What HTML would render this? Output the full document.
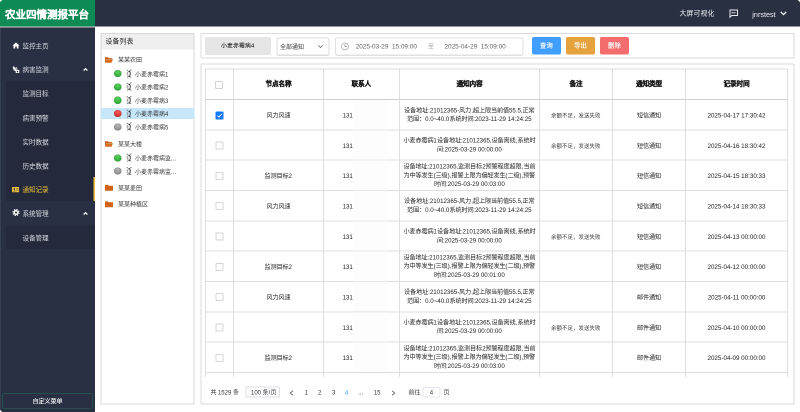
<!DOCTYPE html>
<html lang="zh-CN">
<head>
<meta charset="utf-8">
<style>
*{box-sizing:border-box;margin:0;padding:0}
html,body{width:800px;height:412px;overflow:hidden;background:#fff;will-change:transform;font-family:"Liberation Sans",sans-serif;position:relative}
.a{position:absolute}
#hdr{left:0;top:0;width:1600px;height:53px;background:#283042}
#logo{left:0;top:0;width:190px;height:53px;background:#0e8a55;color:#fff;font-weight:700;font-size:21px;line-height:53px;padding-left:9.8px;padding-top:2px;-webkit-text-stroke:0.7px #fff;white-space:nowrap}
#logoline{left:0;top:53px;width:190px;height:2px;background:#d6ccd6}
#side{left:0;top:55px;width:190px;height:769px;background:#293044}
.sub{left:12px;width:178px;background:#242a3b}
.mi{position:absolute;left:45px;font-size:13.2px;color:#d9dce3;line-height:16px;white-space:nowrap}
.chev{position:absolute;left:166px;width:10px;height:6px}
#tree{left:200.6px;top:66.4px;width:188.8px;height:743px;border:2px solid #d8d8d8}
#treeh{left:0;top:0;width:100%;height:30.8px;background:#efefef;font-size:13.7px;line-height:30.8px;padding-left:8px;color:#222}
.tn{position:absolute;font-size:12px;color:#333;white-space:nowrap;line-height:16px}
.panel{border:2px solid #dadada;border-radius:3px}
.btn{position:absolute;top:74px;height:35.4px;border-radius:4px;color:#fff;font-size:12.6px;line-height:35.4px;text-align:center;-webkit-text-stroke:0.3px #fff}
table{border-collapse:collapse}
.th{position:absolute;font-size:13.34px;font-weight:bold;color:#111;-webkit-text-stroke:0.4px #111;text-align:center;line-height:16px;white-space:nowrap}
.td{position:absolute;font-size:12.3px;color:#222;text-align:center;line-height:16px;white-space:nowrap}
.td.sm{font-size:10.8px;color:#3a3a3a}
.td.tm{font-size:12.5px}
.cb{position:absolute;width:16px;height:16px;border:2px solid #d4d4d4;border-radius:2px;background:#fff}
.cb.on{background:#1677ff;border-color:#1677ff}
.cb svg{position:absolute;left:-2px;top:-2px}
.pg{position:absolute;top:777.2px;font-size:12px;line-height:16px;color:#333;white-space:nowrap}
.pc{width:12px;text-align:center}
.cell{position:absolute;font-size:12px;color:#333;text-align:center;line-height:16px;white-space:nowrap}
#root{position:absolute;left:0;top:0;width:1600px;height:824px;transform:scale(0.5);transform-origin:0 0;overflow:hidden}
</style>
</head>
<body>
<div id="root">
<div id="hdr" class="a"></div>
<div id="logo" class="a">农业四情测报平台</div>
<div id="logoline" class="a"></div>
<div class="a" style="left:1359.2px;top:19px;font-size:13.8px;color:#f4f5f7;line-height:16px;white-space:nowrap">大屏可视化</div>
<svg class="a" style="left:1457px;top:18px" width="20" height="18" viewBox="0 0 10 9"><path d="M1 1 H9 V6.5 H3.2 L1.5 8.2 V1 Z" fill="none" stroke="#e8eaf0" stroke-width="1"/><path d="M3 3.8 H7" stroke="#e8eaf0" stroke-width="0.9"/></svg>
<div class="a" style="left:1504.6px;top:20.6px;font-size:14.5px;color:#f4f5f7;line-height:16px;white-space:nowrap">jnrstest</div>
<svg class="a" style="left:1559.6px;top:22.4px" width="14" height="10" viewBox="0 0 7 5"><path d="M0.8 0.9 L3.5 3.6 L6.2 0.9" fill="none" stroke="#eef0f4" stroke-width="1.35"/></svg>

<div id="side" class="a">
</div>
<div class="a sub" style="top:162px;height:240px"></div>
<div class="a sub" style="top:451.2px;height:47px"></div>
<div class="a" style="left:187px;top:354px;width:3px;height:48px;background:#eec23a"></div>
<div class="a" style="left:0;top:55px;width:190px;height:769px">
  <!-- top items -->
  <svg class="a" style="left:25px;top:30px" width="14" height="12" viewBox="0 0 7 6"><path d="M3.5 0 L7 3 H6 V6 H4.3 V4 H2.7 V6 H1 V3 H0 Z" fill="#fff"/></svg>
  <div class="mi" style="top:30.4px">监控主页</div>
  <svg class="a" style="left:24.6px;top:76.6px" width="14" height="14.8" viewBox="0 0 7 7.4"><ellipse cx="2" cy="2.8" rx="1.3" ry="2.7" transform="rotate(-28 2 2.8)" fill="#e8eaf0"/><path d="M3.8 1.2 L4.6 3.6" stroke="#e8eaf0" stroke-width="0.9"/><rect x="3.2" y="3.9" width="3.6" height="3.4" fill="#fff"/><circle cx="5" cy="5.6" r="0.75" fill="#293044"/></svg>
  <div class="mi" style="top:77.4px">病害监测</div>
  <svg class="chev" style="top:81px" viewBox="0 0 5 3"><path d="M0.6 2.5 L2.5 0.7 L4.4 2.5" fill="none" stroke="#fff" stroke-width="1.25"/></svg>
  <div class="mi" style="top:125.4px">监测目标</div>
  <div class="mi" style="top:174.4px">病害预警</div>
  <div class="mi" style="top:222.4px">实时数据</div>
  <div class="mi" style="top:270.4px">历史数据</div>
  <svg class="a" style="left:24.2px;top:319.2px" width="14.2" height="10.6" viewBox="0 0 7.1 5.3"><rect x="0" y="0" width="7.1" height="5.3" rx="0.5" fill="#eec23a"/><circle cx="2.3" cy="2" r="0.9" fill="#293044"/><path d="M0.9 4.4 Q2.3 2.6 3.7 4.4 Z" fill="#293044"/><rect x="4.4" y="1.5" width="1.9" height="0.6" fill="#293044"/><rect x="4.4" y="2.8" width="1.9" height="0.6" fill="#293044"/></svg>
  <div class="mi" style="top:317.4px;color:#eec23a">通知记录</div>
  <svg class="a" style="left:25.2px;top:363.2px" width="14" height="14" viewBox="0 0 7 7"><circle cx="3.5" cy="3.5" r="2.5" fill="#fff"/><circle cx="3.5" cy="3.5" r="3" fill="none" stroke="#fff" stroke-width="1.1" stroke-dasharray="1.3 1.05"/><circle cx="3.5" cy="3.5" r="1.05" fill="#293044"/></svg>
  <div class="mi" style="top:365.4px">系统管理</div>
  <svg class="chev" style="top:369px" viewBox="0 0 5 3"><path d="M0.6 2.5 L2.5 0.7 L4.4 2.5" fill="none" stroke="#fff" stroke-width="1.25"/></svg>
  <div class="mi" style="top:414.4px">设备管理</div>
  <div class="a" style="left:4px;top:731px;width:182px;height:31px;border:1.5px solid #1f7252;border-radius:4px;color:#fff;font-size:12.2px;line-height:28px;padding-top:2px;-webkit-text-stroke:0.2px #fff;text-align:center">自定义菜单</div>
</div>

<!-- tree -->
<div id="tree" class="a">
  <div id="treeh" class="a">设备列表</div>
</div>
<div id="treeitems">
<div class="a" style="left:202px;top:216px;width:186.8px;height:22px;background:#c6e6fa"></div>
<svg class="a" style="left:210px;top:113.6px" width="16" height="12" viewBox="0 0 8 6"><path d="M0 0.3 H3 L3.7 1.1 H7 V2 H1.6 L0 5.5 Z" fill="#c45a12"/><path d="M1.7 2.2 H8 L6.5 5.7 H0 Z" fill="#d66d1e"/></svg>
<div class="tn" style="left:236px;top:112.2px">某某农田</div>
<div class="a" style="left:228.2px;top:140px;width:14.4px;height:14.4px;border-radius:50%;background:radial-gradient(circle at 50% 30%,#5ad35f,#1e9a2a);box-shadow:inset 0 0 0 0.7px rgba(0,0,0,0.22)"></div>
<svg class="a" style="left:251.6px;top:137.8px" width="12" height="18" viewBox="0 0 6 9"><path d="M2.4 2.3 L1.5 1.1 L0.5 0.9 M3.6 2.3 L4.4 1.1 L5.5 0.7" fill="none" stroke="#555" stroke-width="0.6"/><path d="M3 2.1 Q4.5 2.6 4.2 5 Q4 7.4 3 7.9" fill="none" stroke="#111" stroke-width="0.8"/><path d="M3 2.1 Q1.6 2.6 1.8 5 Q2 7.4 3 7.9" fill="none" stroke="#777" stroke-width="0.6"/><path d="M1.4 3 Q0.5 5 1.3 7.2" fill="none" stroke="#bbb" stroke-width="0.6"/><path d="M3.9 7.6 L5.2 8.4 M2.3 7.6 L1.2 8.4" stroke="#333" stroke-width="0.55"/></svg>
<div class="tn" style="left:270px;top:140.6px">小麦赤霉病1</div>
<div class="a" style="left:228.2px;top:166.6px;width:14.4px;height:14.4px;border-radius:50%;background:radial-gradient(circle at 50% 30%,#5ad35f,#1e9a2a);box-shadow:inset 0 0 0 0.7px rgba(0,0,0,0.22)"></div>
<svg class="a" style="left:251.6px;top:164.4px" width="12" height="18" viewBox="0 0 6 9"><path d="M2.4 2.3 L1.5 1.1 L0.5 0.9 M3.6 2.3 L4.4 1.1 L5.5 0.7" fill="none" stroke="#555" stroke-width="0.6"/><path d="M3 2.1 Q4.5 2.6 4.2 5 Q4 7.4 3 7.9" fill="none" stroke="#111" stroke-width="0.8"/><path d="M3 2.1 Q1.6 2.6 1.8 5 Q2 7.4 3 7.9" fill="none" stroke="#777" stroke-width="0.6"/><path d="M1.4 3 Q0.5 5 1.3 7.2" fill="none" stroke="#bbb" stroke-width="0.6"/><path d="M3.9 7.6 L5.2 8.4 M2.3 7.6 L1.2 8.4" stroke="#333" stroke-width="0.55"/></svg>
<div class="tn" style="left:270px;top:167.2px">小麦赤霉病2</div>
<div class="a" style="left:228.2px;top:193.2px;width:14.4px;height:14.4px;border-radius:50%;background:radial-gradient(circle at 50% 30%,#5ad35f,#1e9a2a);box-shadow:inset 0 0 0 0.7px rgba(0,0,0,0.22)"></div>
<svg class="a" style="left:251.6px;top:191px" width="12" height="18" viewBox="0 0 6 9"><path d="M2.4 2.3 L1.5 1.1 L0.5 0.9 M3.6 2.3 L4.4 1.1 L5.5 0.7" fill="none" stroke="#555" stroke-width="0.6"/><path d="M3 2.1 Q4.5 2.6 4.2 5 Q4 7.4 3 7.9" fill="none" stroke="#111" stroke-width="0.8"/><path d="M3 2.1 Q1.6 2.6 1.8 5 Q2 7.4 3 7.9" fill="none" stroke="#777" stroke-width="0.6"/><path d="M1.4 3 Q0.5 5 1.3 7.2" fill="none" stroke="#bbb" stroke-width="0.6"/><path d="M3.9 7.6 L5.2 8.4 M2.3 7.6 L1.2 8.4" stroke="#333" stroke-width="0.55"/></svg>
<div class="tn" style="left:270px;top:193.8px">小麦赤霉病3</div>
<div class="a" style="left:228.2px;top:219.8px;width:14.4px;height:14.4px;border-radius:50%;background:radial-gradient(circle at 50% 30%,#ff5a5a,#c81e1e);box-shadow:inset 0 0 0 0.7px rgba(0,0,0,0.22)"></div>
<svg class="a" style="left:251.6px;top:217.6px" width="12" height="18" viewBox="0 0 6 9"><path d="M2.4 2.3 L1.5 1.1 L0.5 0.9 M3.6 2.3 L4.4 1.1 L5.5 0.7" fill="none" stroke="#555" stroke-width="0.6"/><path d="M3 2.1 Q4.5 2.6 4.2 5 Q4 7.4 3 7.9" fill="none" stroke="#111" stroke-width="0.8"/><path d="M3 2.1 Q1.6 2.6 1.8 5 Q2 7.4 3 7.9" fill="none" stroke="#777" stroke-width="0.6"/><path d="M1.4 3 Q0.5 5 1.3 7.2" fill="none" stroke="#bbb" stroke-width="0.6"/><path d="M3.9 7.6 L5.2 8.4 M2.3 7.6 L1.2 8.4" stroke="#333" stroke-width="0.55"/></svg>
<div class="tn" style="left:270px;top:220.4px">小麦赤霉病4</div>
<div class="a" style="left:228.2px;top:246.6px;width:14.4px;height:14.4px;border-radius:50%;background:radial-gradient(circle at 50% 30%,#b8b8b8,#7a7a7a);box-shadow:inset 0 0 0 0.7px rgba(0,0,0,0.22)"></div>
<svg class="a" style="left:251.6px;top:244.4px" width="12" height="18" viewBox="0 0 6 9"><path d="M2.4 2.3 L1.5 1.1 L0.5 0.9 M3.6 2.3 L4.4 1.1 L5.5 0.7" fill="none" stroke="#555" stroke-width="0.6"/><path d="M3 2.1 Q4.5 2.6 4.2 5 Q4 7.4 3 7.9" fill="none" stroke="#111" stroke-width="0.8"/><path d="M3 2.1 Q1.6 2.6 1.8 5 Q2 7.4 3 7.9" fill="none" stroke="#777" stroke-width="0.6"/><path d="M1.4 3 Q0.5 5 1.3 7.2" fill="none" stroke="#bbb" stroke-width="0.6"/><path d="M3.9 7.6 L5.2 8.4 M2.3 7.6 L1.2 8.4" stroke="#333" stroke-width="0.55"/></svg>
<div class="tn" style="left:270px;top:247.2px">小麦赤霉病5</div>
<svg class="a" style="left:210px;top:282.2px" width="16" height="12" viewBox="0 0 8 6"><path d="M0 0.3 H3 L3.7 1.1 H7 V2 H1.6 L0 5.5 Z" fill="#c45a12"/><path d="M1.7 2.2 H8 L6.5 5.7 H0 Z" fill="#d66d1e"/></svg>
<div class="tn" style="left:236px;top:280.8px">某某大楼</div>
<div class="a" style="left:228.2px;top:308.6px;width:14.4px;height:14.4px;border-radius:50%;background:radial-gradient(circle at 50% 30%,#5ad35f,#1e9a2a);box-shadow:inset 0 0 0 0.7px rgba(0,0,0,0.22)"></div>
<svg class="a" style="left:251.6px;top:306.4px" width="12" height="18" viewBox="0 0 6 9"><path d="M2.4 2.3 L1.5 1.1 L0.5 0.9 M3.6 2.3 L4.4 1.1 L5.5 0.7" fill="none" stroke="#555" stroke-width="0.6"/><path d="M3 2.1 Q4.5 2.6 4.2 5 Q4 7.4 3 7.9" fill="none" stroke="#111" stroke-width="0.8"/><path d="M3 2.1 Q1.6 2.6 1.8 5 Q2 7.4 3 7.9" fill="none" stroke="#777" stroke-width="0.6"/><path d="M1.4 3 Q0.5 5 1.3 7.2" fill="none" stroke="#bbb" stroke-width="0.6"/><path d="M3.9 7.6 L5.2 8.4 M2.3 7.6 L1.2 8.4" stroke="#333" stroke-width="0.55"/></svg>
<div class="tn" style="left:270px;top:309.2px">小麦赤霉病监...</div>
<div class="a" style="left:228.2px;top:335px;width:14.4px;height:14.4px;border-radius:50%;background:radial-gradient(circle at 50% 30%,#b8b8b8,#7a7a7a);box-shadow:inset 0 0 0 0.7px rgba(0,0,0,0.22)"></div>
<svg class="a" style="left:251.6px;top:332.8px" width="12" height="18" viewBox="0 0 6 9"><path d="M2.4 2.3 L1.5 1.1 L0.5 0.9 M3.6 2.3 L4.4 1.1 L5.5 0.7" fill="none" stroke="#555" stroke-width="0.6"/><path d="M3 2.1 Q4.5 2.6 4.2 5 Q4 7.4 3 7.9" fill="none" stroke="#111" stroke-width="0.8"/><path d="M3 2.1 Q1.6 2.6 1.8 5 Q2 7.4 3 7.9" fill="none" stroke="#777" stroke-width="0.6"/><path d="M1.4 3 Q0.5 5 1.3 7.2" fill="none" stroke="#bbb" stroke-width="0.6"/><path d="M3.9 7.6 L5.2 8.4 M2.3 7.6 L1.2 8.4" stroke="#333" stroke-width="0.55"/></svg>
<div class="tn" style="left:270px;top:335.6px">小麦赤霉病监...</div>
<svg class="a" style="left:210px;top:369.2px" width="16" height="13" viewBox="0 0 8 6.5"><path d="M0 0.4 H3 L3.8 1.3 H8 V6.3 H0 Z" fill="#cf6418"/></svg>
<div class="tn" style="left:236px;top:369px">某某麦田</div>
<svg class="a" style="left:210px;top:401.6px" width="16" height="13" viewBox="0 0 8 6.5"><path d="M0 0.4 H3 L3.8 1.3 H8 V6.3 H0 Z" fill="#cf6418"/></svg>
<div class="tn" style="left:236px;top:401.4px">某某种植区</div>
</div><!--/treeitems-->

<!-- toolbar panel -->
<div class="a panel" style="left:400.6px;top:66.4px;width:1188.8px;height:50.2px"></div>
<div class="a" style="left:408.8px;top:74px;width:133px;height:35.8px;background:#e6e6e6;border-radius:4px;font-size:11.8px;line-height:35.8px;text-align:center;color:#111;-webkit-text-stroke:0.1px #111">小麦赤霉病4</div>
<div class="a" style="left:553px;top:74.8px;width:106.2px;height:36px;border:2px solid #dcdcdc;border-radius:4px;font-size:12px;line-height:32px;padding-left:5.4px;padding-top:1.4px;color:#333">全部通知</div>
<svg class="a" style="left:636px;top:90px" width="10" height="6" viewBox="0 0 5 3"><path d="M0.4 0.4 L2.5 2.5 L4.6 0.4" fill="none" stroke="#666" stroke-width="0.8"/></svg>
<div class="a" style="left:670px;top:75px;width:377px;height:36px;border:2px solid #e0e0e0;border-radius:4px"></div>
<svg class="a" style="left:682px;top:85px" width="16" height="16" viewBox="0 0 8 8"><circle cx="4" cy="4" r="3.4" fill="none" stroke="#a8a8a8" stroke-width="0.75"/><path d="M3.9 1.9 V4.1 H5.9" fill="none" stroke="#999" stroke-width="0.8"/></svg>
<div class="cell" style="left:711.4px;top:85px;color:#606266;text-align:left;font-size:12.8px">2025-03-29&nbsp;&nbsp;15:09:00</div>
<div class="cell" style="left:856px;top:85px;color:#999;text-align:left">至</div>
<div class="cell" style="left:889px;top:85px;color:#606266;text-align:left;font-size:12.8px">2025-04-29&nbsp;&nbsp;15:09:00</div>
<div class="btn" style="left:1064px;width:58.4px;background:#409eff">查询</div>
<div class="btn" style="left:1132.4px;width:57.6px;background:#e6a23c">导出</div>
<div class="btn" style="left:1200.4px;width:57.8px;background:#f56c6c">删除</div>

<!-- table panel -->
<div class="a panel" style="left:400.6px;top:127.2px;width:1188.8px;height:681.6px"></div>
<div id="tbl">
<div class="a" style="left:411px;top:136.5px;width:1164px;height:2px;background:#dedede"></div>
<div class="a" style="left:411px;top:198px;width:1164px;height:2px;background:#cfcfcf"></div>
<div class="a" style="left:411px;top:258.64px;width:1164px;height:2px;background:#dedede"></div>
<div class="a" style="left:411px;top:319.28px;width:1164px;height:2px;background:#dedede"></div>
<div class="a" style="left:411px;top:379.94px;width:1164px;height:2px;background:#dedede"></div>
<div class="a" style="left:411px;top:440.58px;width:1164px;height:2px;background:#dedede"></div>
<div class="a" style="left:411px;top:501.22px;width:1164px;height:2px;background:#dedede"></div>
<div class="a" style="left:411px;top:561.86px;width:1164px;height:2px;background:#dedede"></div>
<div class="a" style="left:411px;top:622.52px;width:1164px;height:2px;background:#dedede"></div>
<div class="a" style="left:411px;top:683.16px;width:1164px;height:2px;background:#dedede"></div>
<div class="a" style="left:411px;top:743.8px;width:1164px;height:2px;background:#dedede"></div>
<div class="a" style="left:410px;top:136.5px;width:2px;height:617.5px;background:#dedede"></div>
<div class="a" style="left:465.5px;top:136.5px;width:2px;height:617.5px;background:#dedede"></div>
<div class="a" style="left:645.5px;top:136.5px;width:2px;height:617.5px;background:#dedede"></div>
<div class="a" style="left:798px;top:136.5px;width:2px;height:617.5px;background:#dedede"></div>
<div class="a" style="left:1077.5px;top:136.5px;width:2px;height:617.5px;background:#dedede"></div>
<div class="a" style="left:1224px;top:136.5px;width:2px;height:617.5px;background:#dedede"></div>
<div class="a" style="left:1370px;top:136.5px;width:2px;height:617.5px;background:#dedede"></div>
<div class="a" style="left:1574px;top:136.5px;width:2px;height:617.5px;background:#dedede"></div>
<div class="th" style="left:466.5px;width:180px;top:159.76px">节点名称</div>
<div class="th" style="left:646.5px;width:152.5px;top:159.76px">联系人</div>
<div class="th" style="left:799px;width:279.5px;top:159.76px">通知内容</div>
<div class="th" style="left:1078.5px;width:146.5px;top:159.76px">备注</div>
<div class="th" style="left:1225px;width:146px;top:159.76px">通知类型</div>
<div class="th" style="left:1371px;width:204px;top:159.76px">记录时间</div>
<div class="cb" style="left:430px;top:161.5px"></div>
<div class="cb on" style="left:430.8px;top:222.52px"><svg width=16 height=16 viewBox="0 0 8 8"><path d="M2 4.2 L3.5 5.6 L6.2 2.6" fill=none stroke=#fff stroke-width=0.9 /></svg></div>
<div class="td" style="left:466.5px;width:180px;top:223.12px">风力风速</div>
<div class="td ph" style="left:646.5px;width:152.5px;top:223.12px">13100000000</div>
<div class="td" style="left:799px;width:279.5px;top:212.52px;line-height:17.4px">设备地址:21012365-风力,超上限当前值55.5,正常<br>范围：0.0~40.0系统时间:2023-11-29 14:24:25</div>
<div class="td sm" style="left:1078.5px;width:146.5px;top:223.12px">余额不足，发送失败</div>
<div class="td" style="left:1225px;width:146px;top:223.12px">短信通知</div>
<div class="td tm" style="left:1371px;width:204px;top:223.12px">2025-04-17 17:30:42</div>
<div class="cb" style="left:430.8px;top:283.16px"></div>
<div class="td ph" style="left:646.5px;width:152.5px;top:283.76px">13100000000</div>
<div class="td" style="left:799px;width:279.5px;top:273.16px;line-height:17.4px">小麦赤霉病1设备地址:21012365,设备离线,系统时<br>间:2025-03-29 00:00:00</div>
<div class="td sm" style="left:1078.5px;width:146.5px;top:283.76px">余额不足，发送失败</div>
<div class="td" style="left:1225px;width:146px;top:283.76px">短信通知</div>
<div class="td tm" style="left:1371px;width:204px;top:283.76px">2025-04-16 18:30:42</div>
<div class="cb" style="left:430.8px;top:343.82px"></div>
<div class="td" style="left:466.5px;width:180px;top:344.42px">监测目标2</div>
<div class="td ph" style="left:646.5px;width:152.5px;top:344.42px">13100000000</div>
<div class="td" style="left:799px;width:279.5px;top:325.12px;line-height:17.4px">设备地址:21012365,监测目标2预警程度超限,当前<br>为中等发生(三级),报警上限为偏轻发生(二级),预警<br>时间:2025-03-29 00:03:00</div>
<div class="td" style="left:1225px;width:146px;top:344.42px">短信通知</div>
<div class="td tm" style="left:1371px;width:204px;top:344.42px">2025-04-15 18:30:33</div>
<div class="cb" style="left:430.8px;top:404.46px"></div>
<div class="td" style="left:466.5px;width:180px;top:405.06px">风力风速</div>
<div class="td ph" style="left:646.5px;width:152.5px;top:405.06px">13100000000</div>
<div class="td" style="left:799px;width:279.5px;top:394.46px;line-height:17.4px">设备地址:21012365-风力,超上限当前值55.5,正常<br>范围：0.0~40.0系统时间:2023-11-29 14:24:25</div>
<div class="td" style="left:1225px;width:146px;top:405.06px">短信通知</div>
<div class="td tm" style="left:1371px;width:204px;top:405.06px">2025-04-14 18:30:33</div>
<div class="cb" style="left:430.8px;top:465.1px"></div>
<div class="td ph" style="left:646.5px;width:152.5px;top:465.7px">13100000000</div>
<div class="td" style="left:799px;width:279.5px;top:455.1px;line-height:17.4px">小麦赤霉病1设备地址:21012365,设备离线,系统时<br>间:2025-03-29 00:00:00</div>
<div class="td sm" style="left:1078.5px;width:146.5px;top:465.7px">余额不足，发送失败</div>
<div class="td" style="left:1225px;width:146px;top:465.7px">短信通知</div>
<div class="td tm" style="left:1371px;width:204px;top:465.7px">2025-04-13 00:00:00</div>
<div class="cb" style="left:430.8px;top:525.74px"></div>
<div class="td" style="left:466.5px;width:180px;top:526.34px">监测目标2</div>
<div class="td ph" style="left:646.5px;width:152.5px;top:526.34px">13100000000</div>
<div class="td" style="left:799px;width:279.5px;top:507.04px;line-height:17.4px">设备地址:21012365,监测目标2预警程度超限,当前<br>为中等发生(三级),报警上限为偏轻发生(二级),预警<br>时间:2025-03-29 00:01:00</div>
<div class="td" style="left:1225px;width:146px;top:526.34px">短信通知</div>
<div class="td tm" style="left:1371px;width:204px;top:526.34px">2025-04-12 00:00:00</div>
<div class="cb" style="left:430.8px;top:586.38px"></div>
<div class="td" style="left:466.5px;width:180px;top:586.98px">风力风速</div>
<div class="td ph" style="left:646.5px;width:152.5px;top:586.98px">13100000000</div>
<div class="td" style="left:799px;width:279.5px;top:576.38px;line-height:17.4px">设备地址:21012365-风力,超上限当前值55.5,正常<br>范围：0.0~40.0系统时间:2023-11-29 14:24:25</div>
<div class="td" style="left:1225px;width:146px;top:586.98px">邮件通知</div>
<div class="td tm" style="left:1371px;width:204px;top:586.98px">2025-04-11 00:00:00</div>
<div class="cb" style="left:430.8px;top:647.04px"></div>
<div class="td ph" style="left:646.5px;width:152.5px;top:647.64px">13100000000</div>
<div class="td" style="left:799px;width:279.5px;top:637.04px;line-height:17.4px">小麦赤霉病1设备地址:21012365,设备离线,系统时<br>间:2025-03-29 00:00:00</div>
<div class="td sm" style="left:1078.5px;width:146.5px;top:647.64px">余额不足，发送失败</div>
<div class="td" style="left:1225px;width:146px;top:647.64px">邮件通知</div>
<div class="td tm" style="left:1371px;width:204px;top:647.64px">2025-04-10 00:00:00</div>
<div class="cb" style="left:430.8px;top:707.68px"></div>
<div class="td" style="left:466.5px;width:180px;top:708.28px">监测目标2</div>
<div class="td ph" style="left:646.5px;width:152.5px;top:708.28px">13100000000</div>
<div class="td" style="left:799px;width:279.5px;top:688.98px;line-height:17.4px">设备地址:21012365,监测目标2预警程度超限,当前<br>为中等发生(三级),报警上限为偏轻发生(二级),预警<br>时间:2025-03-29 00:03:00</div>
<div class="td" style="left:1225px;width:146px;top:708.28px">邮件通知</div>
<div class="td tm" style="left:1371px;width:204px;top:708.28px">2025-04-09 00:00:00</div>
<div class="a" style="left:704.6px;top:200px;width:71.2px;height:58.64px;background:#fdfdfd"></div>
<div class="a" style="left:704.6px;top:260.64px;width:71.2px;height:58.64px;background:#fdfdfd"></div>
<div class="a" style="left:704.6px;top:321.28px;width:71.2px;height:58.64px;background:#fdfdfd"></div>
<div class="a" style="left:704.6px;top:381.94px;width:71.2px;height:58.64px;background:#fdfdfd"></div>
<div class="a" style="left:704.6px;top:442.58px;width:71.2px;height:58.64px;background:#fdfdfd"></div>
<div class="a" style="left:704.6px;top:503.22px;width:71.2px;height:58.64px;background:#fdfdfd"></div>
<div class="a" style="left:704.6px;top:563.86px;width:71.2px;height:58.64px;background:#fdfdfd"></div>
<div class="a" style="left:704.6px;top:624.52px;width:71.2px;height:58.64px;background:#fdfdfd"></div>
<div class="a" style="left:704.6px;top:685.16px;width:71.2px;height:58.64px;background:#fdfdfd"></div>
<div class="a" style="left:707px;top:258.64px;width:67px;height:2px;background:#e9e9e9"></div>
<div class="a" style="left:707px;top:319.28px;width:67px;height:2px;background:#e9e9e9"></div>
<div class="a" style="left:707px;top:379.94px;width:67px;height:2px;background:#e9e9e9"></div>
<div class="a" style="left:707px;top:440.58px;width:67px;height:2px;background:#e9e9e9"></div>
<div class="a" style="left:707px;top:501.22px;width:67px;height:2px;background:#e9e9e9"></div>
<div class="a" style="left:707px;top:561.86px;width:67px;height:2px;background:#e9e9e9"></div>
<div class="a" style="left:707px;top:622.52px;width:67px;height:2px;background:#e9e9e9"></div>
<div class="a" style="left:707px;top:683.16px;width:67px;height:2px;background:#e9e9e9"></div>
</div><!--/tbl-->
<div class="a" style="left:0;top:55px;width:2px;height:769px;background:#373f53"></div>
<svg class="a" style="left:0;top:0" width="6" height="6" viewBox="0 0 3 3"><path d="M0 0 H2.2 L0 2.2 Z" fill="#fff"/></svg>
<svg class="a" style="left:1594px;top:0" width="6" height="6" viewBox="0 0 3 3"><path d="M3 0 H0.8 L3 2.2 Z" fill="#fff"/></svg>
<svg class="a" style="left:0;top:818px" width="6" height="6" viewBox="0 0 3 3"><path d="M0 3 V0.8 L2.2 3 Z" fill="#fff"/></svg>
<!-- pagination -->
<div class="pg" style="left:420.6px">共 1529 条</div>
<div class="a" style="left:491.2px;top:773.4px;width:68.8px;height:21.6px;border:2px solid #dcdfe6;border-radius:4px"></div>
<div class="pg" style="left:502px;color:#333">100 条/页</div>
<svg class="a" style="left:579px;top:780.6px" width="8" height="10" viewBox="0 0 4 5"><path d="M3.4 0.3 L0.8 2.5 L3.4 4.7" fill="none" stroke="#444" stroke-width="0.7"/></svg>
<div class="pg pc" style="left:606.4px">1</div>
<div class="pg pc" style="left:633.4px">2</div>
<div class="pg pc" style="left:661.4px">3</div>
<div class="pg pc" style="left:687.4px;color:#409eff">4</div>
<div class="pg pc" style="left:715.4px">...</div>
<div class="pg pc" style="left:747.6px">15</div>
<svg class="a" style="left:783px;top:780.6px" width="8" height="10" viewBox="0 0 4 5"><path d="M0.6 0.3 L3.2 2.5 L0.6 4.7" fill="none" stroke="#444" stroke-width="0.7"/></svg>
<div class="pg" style="left:817.2px">前往</div>
<div class="a" style="left:845.4px;top:773.8px;width:35.2px;height:21.2px;border:2px solid #e4e7ed;border-radius:4px"></div>
<div class="pg pc" style="left:856.8px;color:#333">4</div>
<div class="pg" style="left:886.8px">页</div>
</div>
</body>
</html>
